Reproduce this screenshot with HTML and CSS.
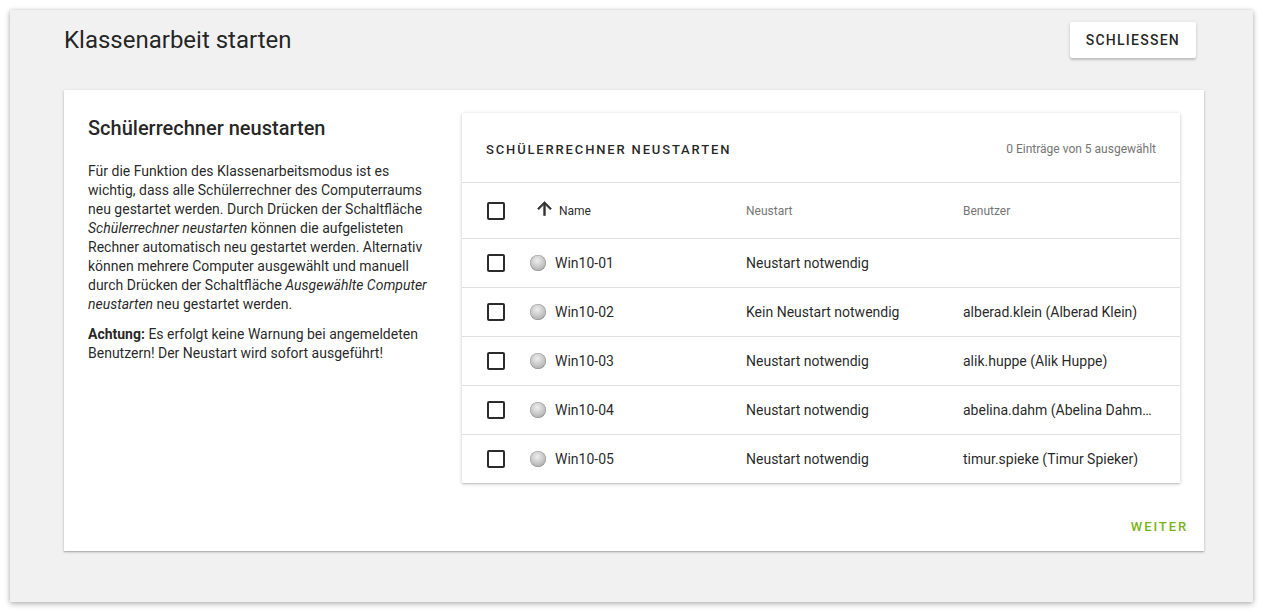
FILE: index.html
```html
<!DOCTYPE html>
<html lang="de">
<head>
<meta charset="utf-8">
<title>Klassenarbeit starten</title>
<link rel="stylesheet" href="styles.css">
</head>
<body>
<div class="dialog">
  <div class="dialog-header">
    <h1 class="dialog-title">Klassenarbeit starten</h1>
    <button class="btn btn-raised">Schliessen</button>
  </div>
  <div class="card">
    <div class="card-content">
      <div class="info">
        <h2 class="info-title">Schülerrechner neustarten</h2>
        <p class="info-text">Für die Funktion des Klassenarbeitsmodus ist es wichtig, dass alle Schülerrechner des Computerraums neu gestartet werden. Durch Drücken der Schaltfläche <em>Schülerrechner neustarten</em> können die aufgelisteten Rechner automatisch neu gestartet werden. Alternativ können mehrere Computer ausgewählt und manuell durch Drücken der Schaltfläche <em>Ausgewählte Computer neustarten</em> neu gestartet werden.</p>
        <p class="info-text"><strong>Achtung:</strong> Es erfolgt keine Warnung bei angemeldeten Benutzern! Der Neustart wird sofort ausgeführt!</p>
      </div>
      <div class="table-card">
        <div class="table-head">
          <span class="table-title">Schülerrechner neustarten</span>
          <span class="table-count">0 Einträge von 5 ausgewählt</span>
        </div>
        <div class="row row-header">
          <span class="cell"><span class="checkbox"></span></span>
          <span class="cell col-name sorted">
            <svg class="sort-icon" viewBox="0 0 24 24" width="21" height="21"><path d="M4 12l1.41 1.41L11 7.83V20h2V7.83l5.58 5.59L20 12l-8-8-8 8z" fill="currentColor" stroke="currentColor" stroke-width="0.7" stroke-linejoin="miter"/></svg>
            Name
          </span>
          <span class="cell col-label">Neustart</span>
          <span class="cell col-label">Benutzer</span>
        </div>
        <div class="row">
          <span class="cell"><span class="checkbox"></span></span>
          <span class="cell col-name"><span class="status"></span>Win10-01</span>
          <span class="cell">Neustart notwendig</span>
          <span class="cell"></span>
        </div>
        <div class="row">
          <span class="cell"><span class="checkbox"></span></span>
          <span class="cell col-name"><span class="status"></span>Win10-02</span>
          <span class="cell">Kein Neustart notwendig</span>
          <span class="cell truncate">alberad.klein (Alberad Klein)</span>
        </div>
        <div class="row">
          <span class="cell"><span class="checkbox"></span></span>
          <span class="cell col-name"><span class="status"></span>Win10-03</span>
          <span class="cell">Neustart notwendig</span>
          <span class="cell truncate">alik.huppe (Alik Huppe)</span>
        </div>
        <div class="row">
          <span class="cell"><span class="checkbox"></span></span>
          <span class="cell col-name"><span class="status"></span>Win10-04</span>
          <span class="cell">Neustart notwendig</span>
          <span class="cell truncate">abelina.dahm (Abelina Dahmen)</span>
        </div>
        <div class="row">
          <span class="cell"><span class="checkbox"></span></span>
          <span class="cell col-name"><span class="status"></span>Win10-05</span>
          <span class="cell">Neustart notwendig</span>
          <span class="cell truncate">timur.spieke (Timur Spieker)</span>
        </div>
      </div>
    </div>
    <div class="card-actions">
      <button class="btn btn-flat">Weiter</button>
    </div>
  </div>
</div>
</body>
</html>
```

FILE: styles.css
```css
* { box-sizing: border-box; }

html, body {
  margin: 0;
  padding: 0;
  background: #ffffff;
  font-family: Roboto, "Liberation Sans", Arial, sans-serif;
  color: rgba(0, 0, 0, 0.87);
}

.dialog {
  margin: 10px;
  height: 592px;
  background: #f1f1f1;
  box-shadow: 0 2px 6px rgba(0, 0, 0, 0.28), 0 0 3px rgba(0, 0, 0, 0.12);
  padding: 12px 49px 0 54px;
}

.dialog-header {
  display: flex;
  align-items: center;
  justify-content: space-between;
  height: 36px;
  padding-right: 8px;
}

.dialog-title {
  margin: 0;
  font-size: 24px;
  font-weight: 400;
  line-height: 32px;
  color: rgba(0, 0, 0, 0.87);
}

.btn {
  font-family: inherit;
  border: none;
  background: none;
  height: 36px;
  padding: 0 16px;
  font-size: 14px;
  font-weight: 500;
  letter-spacing: 1.25px;
  text-transform: uppercase;
  cursor: pointer;
}

.btn-raised {
  background: #ffffff;
  border-radius: 2px;
  color: rgba(0, 0, 0, 0.87);
  box-shadow: 0 2px 2px rgba(0, 0, 0, 0.14), 0 1px 4px rgba(0, 0, 0, 0.12);
}

.btn-flat {
  color: #7ab317;
  padding: 0 7px 0 8px;
  font-size: 13px;
  letter-spacing: 1.9px;
}

.card {
  margin-top: 32px;
  background: #ffffff;
  box-shadow: 0 1px 3px rgba(0, 0, 0, 0.2), 0 1px 1px rgba(0, 0, 0, 0.14);
}

.card-content {
  display: flex;
  gap: 24px;
  padding: 23px 24px 0 24px;
}

.info {
  width: 350px;
  flex: none;
}

.info-title {
  margin: 0;
  font-size: 20px;
  font-weight: 500;
  line-height: 30px;
}

.info-text {
  margin: 19px 0 0 0;
  font-size: 14px;
  line-height: 19px;
}

.info-text + .info-text {
  margin-top: 11px;
}

.info-text strong { font-weight: 700; }

.table-card {
  flex: 1;
  background: #ffffff;
  box-shadow: 0 1px 4px rgba(0, 0, 0, 0.2), 0 1px 1px rgba(0, 0, 0, 0.1);
}

.table-head {
  display: flex;
  align-items: center;
  justify-content: space-between;
  height: 70px;
  padding: 3px 24px 0 24px;
  border-bottom: 1px solid #e0e0e0;
}

.table-title {
  font-size: 13px;
  font-weight: 500;
  letter-spacing: 1.85px;
  text-transform: uppercase;
  color: rgba(0, 0, 0, 0.87);
}

.table-count {
  font-size: 12px;
  color: #757575;
}

.row {
  display: grid;
  grid-template-columns: 44px 216px 217px 1fr;
  align-items: center;
  height: 49px;
  padding: 0 24px;
  border-bottom: 1px solid #e0e0e0;
  font-size: 14px;
  color: rgba(0, 0, 0, 0.87);
}

.row:last-child { border-bottom: none; height: 48px; }

.row-header {
  height: 56px;
  font-size: 12px;
}

.cell {
  display: flex;
  align-items: center;
  min-width: 0;
}

.col-label { color: #757575; }

.sorted { color: rgba(0, 0, 0, 0.87); }

.sort-icon {
  color: #333;
  margin: -4px 4px 0 4px;
}

.checkbox {
  display: block;
  width: 18px;
  height: 18px;
  margin-left: 1px;
  border: 2px solid #2b2b2b;
  border-radius: 2px;
}

.status {
  display: block;
  width: 16px;
  height: 16px;
  border-radius: 50%;
  margin-right: 9px;
  background: radial-gradient(circle at 45% 35%, #eeeeee 0%, #c2c2c2 55%, #939393 100%);
  box-shadow: inset 0 0 0 0.5px rgba(0, 0, 0, 0.25);
}

.truncate {
  display: block;
  white-space: nowrap;
  overflow: hidden;
  text-overflow: ellipsis;
}

.card-actions {
  display: flex;
  justify-content: flex-end;
  padding: 25px 9px 7px 8px;
}
```
